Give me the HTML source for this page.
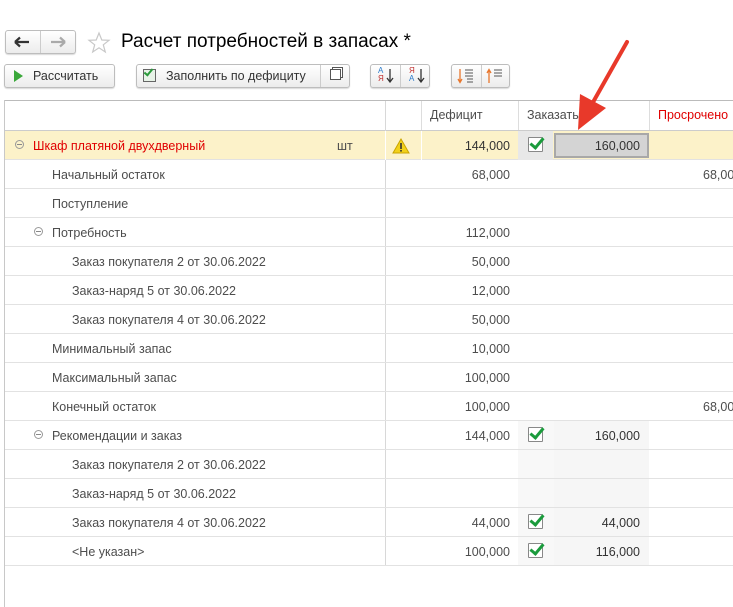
<!DOCTYPE html>
<html><head><meta charset="utf-8"><style>
*{margin:0;padding:0;box-sizing:border-box}
body{width:733px;height:607px;background:#fff;font-family:"Liberation Sans",Arial,sans-serif;font-size:12.5px;color:#4d4d4d;position:relative;overflow:hidden}
.a{position:absolute}
.btn{position:absolute;height:24px;border:1px solid #bdbdbd;border-radius:3px;background:linear-gradient(#fff,#ececec);box-shadow:0 1px 1px rgba(0,0,0,.15)}
.r{position:absolute;left:5px;width:728px;height:29px;border-bottom:1px solid #e2e2e2}
.r span{position:absolute;top:8px;white-space:nowrap}
.n{text-align:right}
.cb{position:absolute;width:15px;height:15px;border:1px solid #888;background:#fff;border-radius:1px}
.cb:after{content:"";position:absolute;left:4px;top:-3px;width:5px;height:11px;border:solid #1a9b3c;border-width:0 3px 3px 0;transform:rotate(40deg)}
.gi{position:absolute;top:9px;width:9px;height:9px;border:1px solid #999;border-radius:50%}
.gi:after{content:"";position:absolute;left:1px;top:3px;width:5px;height:1px;background:#888}
</style></head><body>
<div class="btn" style="left:5px;top:30px;width:71px;height:24px"></div>
<div class="a" style="left:40px;top:31px;width:1px;height:22px;background:#ccc"></div>
<svg class="a" style="left:13px;top:36px" width="18" height="12"><path d="M2 6H16M2 6L7 1.5M2 6L7 10.5" stroke="#333" stroke-width="2.2" fill="none"/></svg>
<svg class="a" style="left:49px;top:36px" width="18" height="12"><path d="M2 6H16M16 6L11 1.5M16 6L11 10.5" stroke="#aaa" stroke-width="2.2" fill="none"/></svg>
<svg class="a" style="left:87px;top:31px" width="24" height="23"><polygon points="12,2 14.8,9 22,9.3 16.3,13.8 18.3,21 12,16.8 5.7,21 7.7,13.8 2,9.3 9.2,9" fill="none" stroke="#c8c8c8" stroke-width="1.2"/></svg>
<div class="a" style="left:121px;top:31px;font-size:19px;color:#000">Расчет потребностей в запасах *</div>

<div class="btn" style="left:4px;top:64px;width:111px"></div>
<div class="a" style="left:14px;top:70px;width:0;height:0;border-left:9px solid #3aa83a;border-top:6px solid transparent;border-bottom:6px solid transparent"></div>
<div class="a" style="left:33px;top:69px;color:#333">Рассчитать</div>
<div class="btn" style="left:136px;top:64px;width:214px"></div>
<div class="a" style="left:320px;top:65px;width:1px;height:22px;background:#ccc"></div>
<div class="a" style="left:143px;top:69px;width:13px;height:13px;border:1px solid #666;background:#e8f3e8"></div>
<div class="a" style="left:146px;top:67px;width:5px;height:9px;border:solid #2a9a3a;border-width:0 2px 2px 0;transform:rotate(40deg)"></div>
<div class="a" style="left:166px;top:69px;color:#333">Заполнить по дефициту</div>
<div class="a" style="left:330px;top:69px;width:11px;height:11px;border:1px solid #555;background:#fff;box-shadow:2px -2px 0 -1px #fff,2px -2px 0 0 #555"></div>
<div class="btn" style="left:370px;top:64px;width:60px"></div>
<div class="a" style="left:400px;top:65px;width:1px;height:22px;background:#ccc"></div>
<div class="a" style="left:378px;top:67px;font-size:8px;line-height:8px;color:#2a7acb">А<br><span style="color:#c03030">Я</span></div>
<svg class="a" style="left:386px;top:69px" width="8" height="14"><path d="M4 0V12M1 9L4 13L7 9" stroke="#333" stroke-width="1.3" fill="none"/></svg>
<div class="a" style="left:409px;top:67px;font-size:8px;line-height:8px;color:#c03030">Я<br><span style="color:#2a7acb">А</span></div>
<svg class="a" style="left:417px;top:69px" width="8" height="14"><path d="M4 0V12M1 9L4 13L7 9" stroke="#333" stroke-width="1.3" fill="none"/></svg>
<div class="btn" style="left:451px;top:64px;width:59px"></div>
<div class="a" style="left:481px;top:65px;width:1px;height:22px;background:#ccc"></div>
<svg class="a" style="left:457px;top:68px" width="20" height="16"><path d="M3 1V14M1 11L3 14.5L5 11" stroke="#e8772e" stroke-width="1.3" fill="none"/><path d="M8 2H16M8 5H16M8 8H16M10 11H16M10 14H16" stroke="#555" stroke-width="1"/></svg>
<svg class="a" style="left:486px;top:68px" width="20" height="16"><path d="M3 15V2M1 5L3 1.5L5 5" stroke="#e8772e" stroke-width="1.3" fill="none"/><path d="M8 2H16M8 5H16M8 8H16" stroke="#555" stroke-width="1"/></svg>

<!-- table -->
<div class="a" style="left:4px;top:100px;width:729px;height:1px;background:#bbb"></div>
<div class="a" style="left:4px;top:100px;width:1px;height:507px;background:#c8c8c8"></div>
<div class="a" style="left:5px;top:101px;width:728px;height:30px;border-bottom:1px solid #ccc"></div>
<div class="a" style="left:385px;top:101px;width:1px;height:465px;background:#d8d8d8"></div>
<div class="a" style="left:421px;top:101px;width:1px;height:29px;background:#ddd"></div>
<div class="a" style="left:518px;top:101px;width:1px;height:29px;background:#ddd"></div>
<div class="a" style="left:649px;top:101px;width:1px;height:29px;background:#ddd"></div>
<div class="a" style="left:430px;top:108px">Дефицит</div>
<div class="a" style="left:527px;top:108px">Заказать</div>
<div class="a" style="left:658px;top:108px;color:#e00000">Просрочено</div>

<div class="a" style="left:518px;top:421px;width:36px;height:145px;background:#f8f8f8"></div>
<div class="a" style="left:554px;top:421px;width:95px;height:145px;background:#f6f6f6"></div>

<div class="r" style="top:131px;background:#fcf2c9">
<div class="gi" style="left:10px"></div><span style="left:28px;color:#e00000">Шкаф платяной двухдверный</span>
<span style="left:332px">шт</span>
<svg class="a" style="left:387px;top:7px" width="18" height="16"><polygon points="9,1 17,15 1,15" fill="#f2d11b" stroke="#c9a400"/><rect x="8.2" y="5" width="1.6" height="6" fill="#333"/><rect x="8.2" y="12" width="1.6" height="1.6" fill="#333"/></svg>
<div class="a" style="left:380px;top:0;width:1px;height:29px;background:#fff"></div>
<div class="a" style="left:416px;top:0;width:1px;height:29px;background:#fff"></div>
<span class="n" style="right:223px;color:#333">144,000</span>
<div class="a" style="left:513px;top:0;width:35px;height:29px;background:#e8e8e8"></div>
<div class="cb" style="left:523px;top:6px"></div>
<div class="a" style="left:549px;top:2px;width:95px;height:25px;background:#d4d4d4;border:2px solid #a8a8a8"></div>
<span class="n" style="right:93px;color:#333">160,000</span>
</div>
<div class="r" style="top:160px"><span style="left:47px">Начальный остаток</span><span style="right:223px">68,000</span><span style="left:698px">68,000</span></div>
<div class="r" style="top:189px"><span style="left:47px">Поступление</span></div>
<div class="r" style="top:218px"><div class="gi" style="left:29px"></div><span style="left:47px">Потребность</span><span style="right:223px">112,000</span></div>
<div class="r" style="top:247px"><span style="left:67px">Заказ покупателя 2 от 30.06.2022</span><span style="right:223px">50,000</span></div>
<div class="r" style="top:276px"><span style="left:67px">Заказ-наряд 5 от 30.06.2022</span><span style="right:223px">12,000</span></div>
<div class="r" style="top:305px"><span style="left:67px">Заказ покупателя 4 от 30.06.2022</span><span style="right:223px">50,000</span></div>
<div class="r" style="top:334px"><span style="left:47px">Минимальный запас</span><span style="right:223px">10,000</span></div>
<div class="r" style="top:363px"><span style="left:47px">Максимальный запас</span><span style="right:223px">100,000</span></div>
<div class="r" style="top:392px"><span style="left:47px">Конечный остаток</span><span style="right:223px">100,000</span><span style="left:698px">68,000</span></div>
<div class="r" style="top:421px"><div class="gi" style="left:29px"></div><span style="left:47px">Рекомендации и заказ</span><span style="right:223px">144,000</span><div class="cb" style="left:523px;top:6px"></div><span class="n" style="right:93px;color:#333">160,000</span></div>
<div class="r" style="top:450px"><span style="left:67px">Заказ покупателя 2 от 30.06.2022</span></div>
<div class="r" style="top:479px"><span style="left:67px">Заказ-наряд 5 от 30.06.2022</span></div>
<div class="r" style="top:508px"><span style="left:67px">Заказ покупателя 4 от 30.06.2022</span><span style="right:223px">44,000</span><div class="cb" style="left:523px;top:6px"></div><span class="n" style="right:93px;color:#333">44,000</span></div>
<div class="r" style="top:537px"><span style="left:67px">&lt;Не указан&gt;</span><span style="right:223px">100,000</span><div class="cb" style="left:523px;top:6px"></div><span class="n" style="right:93px;color:#333">116,000</span></div>

<svg class="a" style="left:570px;top:38px" width="65" height="95"><line x1="57" y1="4" x2="22" y2="66" stroke="#e8392a" stroke-width="4" stroke-linecap="round"/><polygon points="8,92 10,56 36,70" fill="#e8392a"/></svg>
</body></html>
